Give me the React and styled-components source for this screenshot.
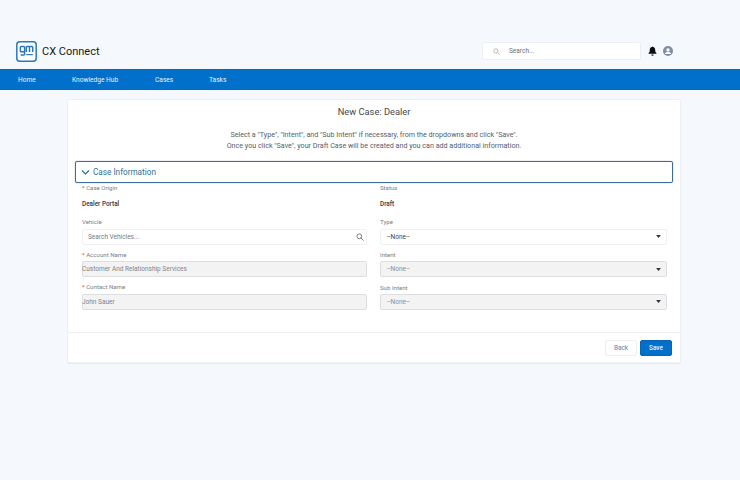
import React from "react";
import styled, { createGlobalStyle } from "styled-components";

const Global = createGlobalStyle`
  html, body { margin: 0; padding: 0; background: #f5f8fd; }
  body { font-family: Roboto, "Liberation Sans", sans-serif; width: 740px; height: 480px; overflow: hidden; }
  * { box-sizing: border-box; }
`;

const Page = styled.div`
  width: 740px;
  height: 480px;
  padding-top: 41px;
  background: #f5f8fd;
`;
const Header = styled.header`
  height: 28px;
  padding: 0 67px 0 16px;
  display: flex;
  align-items: flex-start;
`;
const Brand = styled.div`
  display: flex;
  align-items: center;
  gap: 5px;
  height: 21px;
  flex: 1;
`;
const BrandName = styled.span`
  font-size: 11px;
  color: #16181c;
`;
const TopSearch = styled.div`
  width: 159px;
  height: 18px;
  margin-top: 1px;
  background: #fff;
  border: 1px solid #eceff3;
  border-radius: 2px;
  display: flex;
  align-items: center;
  padding-left: 10px;
  gap: 9px;
  font-size: 6.5px;
  color: #6f6f6f;
`;
const TopIcons = styled.div`
  display: flex;
  align-items: center;
  gap: 6px;
  margin: 1px 0 0 7px;
  height: 18px;
`;
const Nav = styled.nav`
  height: 21px;
  background: #0070cb;
  border-top: 1px solid #0a68b4;
  border-bottom: 1px solid #0a68b4;
  display: flex;
  align-items: center;
  color: #eaf3fb;
  font-size: 6.6px;
`;
const NavItem = styled.span`
  width: ${(p) => p.$w}px;
  flex: none;
  &:first-child { margin-left: 18px; }
`;
const Card = styled.main`
  width: 614px;
  height: 264px;
  margin: 9px 0 0 67px;
  background: #fff;
  border: 1px solid #eef0f4;
  border-radius: 2px;
  box-shadow: 0 1px 1px rgba(60, 70, 90, 0.08);
  display: flex;
  flex-direction: column;
`;
const Title = styled.h1`
  margin: 0;
  padding-top: 5px;
  height: 28px;
  font-size: 9.3px;
  line-height: 13px;
  font-weight: 400;
  color: #45484d;
  text-align: center;
`;
const Intro = styled.p`
  margin: 0;
  height: 33px;
  padding-top: 1px;
  font-size: 7.15px;
  line-height: 11px;
  color: #565d68;
  text-align: center;
`;
const Section = styled.div`
  margin: 0 7px;
  height: 22px;
  border: 1px solid #3f6c92;
  border-radius: 2px;
  box-shadow: 0 0 1px #3f6c92;
  display: flex;
  align-items: center;
  padding-left: 5px;
  gap: 3px;
  font-size: 8.2px;
  color: #336f96;
`;
const Form = styled.div`
  padding: 0 14px;
  display: grid;
  grid-template-columns: 285px 287px;
  column-gap: 13px;
  flex: 1;
`;
const Column = styled.div`
  display: flex;
  flex-direction: column;
`;
const Label = styled.div`
  font-size: 6.1px;
  line-height: 8px;
  height: 8px;
  color: #7a7e84;
  margin-top: ${(p) => p.$top}px;
  margin-bottom: ${(p) => p.$bottom}px;
  & b { color: #c23934; font-weight: 400; }
`;
const Value = styled.div`
  font-size: 6.4px;
  line-height: 8px;
  height: 8px;
  font-weight: 500;
  color: #33363a;
  margin-top: 1px;
  margin-bottom: -1px;
`;
const Input = styled.div`
  height: 16px;
  display: flex;
  align-items: center;
  justify-content: space-between;
  font-size: 6.5px;
  border-radius: 2px;
  border: 1px solid ${(p) => (p.$disabled ? "#dcdee2" : "#eff1f4")};
  background: ${(p) => (p.$disabled ? "#f3f3f4" : "#fff")};
  color: ${(p) => (p.$disabled ? "#7f8388" : "#777b81")};
  text-indent: ${(p) => (p.$flush ? "-1px" : "0")};
  padding: 0 ${(p) => p.$right ?? 4}px 0 ${(p) => p.$left ?? 0}px;
`;
const NoneText = styled.span`
  color: ${(p) => (p.$dark ? "#45484c" : "#8a8e93")};
`;
const Footer = styled.div`
  height: 30px;
  border-top: 1px solid #eef0f3;
  display: flex;
  justify-content: flex-end;
  align-items: flex-start;
  gap: 3px;
  padding: 7px 8px 0 0;
`;
const Button = styled.button`
  width: 32px;
  height: 16px;
  padding: 0;
  border-radius: 2px;
  font-family: inherit;
  font-size: 6.4px;
  font-weight: ${(p) => (p.$primary ? 500 : 400)};
  border: 1px solid ${(p) => (p.$primary ? "#0a66b2" : "#eceef2")};
  background: ${(p) => (p.$primary ? "#0070cb" : "#fff")};
  color: ${(p) => (p.$primary ? "#eef5fc" : "#4f86b3")};
`;

const Logo = () => (
  <svg width="21" height="21" viewBox="0 0 21 21" fill="none">
    <rect x="0.8" y="0.8" width="19.4" height="19.4" rx="3" fill="#fff" stroke="#2b78bd" strokeWidth="1.5" />
    <g stroke="#2b78bd" strokeWidth="1.5" fill="none">
      <path d="M8.6 5.5H5.2a.8.8 0 0 0-.8.8v3.6a.8.8 0 0 0 .8.8h3.4M8.6 5.5v7.6a1 1 0 0 1-1 1H4.6" />
      <path d="M10.3 11V6.3a.8.8 0 0 1 .8-.8h4.8a.8.8 0 0 1 .8.8V11M13.5 5.5V11" />
    </g>
    <path d="M10.2 13.6h6.6" stroke="#2b78bd" strokeWidth="1.2" />
  </svg>
);
const SearchIcon = ({ size, color }) => (
  <svg width={size} height={size} viewBox="0 0 12 12" fill="none" stroke={color} strokeWidth="1.2" style={{ flex: "none" }}>
    <circle cx="5" cy="5" r="3.6" />
    <path d="M7.7 7.7 11 11" strokeLinecap="round" />
  </svg>
);
const Bell = () => (
  <svg width="9" height="10" viewBox="0 0 9 10" fill="#0b0d10">
    <path d="M4.5 0.4c.4 0 .6.3.6.7 1.4.3 2.1 1.4 2.1 2.9 0 1.6.4 2.4 1.3 3.2v.6H.5v-.6c.9-.8 1.3-1.6 1.3-3.2 0-1.5.7-2.6 2.1-2.9 0-.4.2-.7.6-.7z" />
    <path d="M3.3 8.5h2.4a1.2 1.2 0 0 1-2.4 0z" />
  </svg>
);
const Avatar = () => (
  <svg width="10" height="10" viewBox="0 0 10 10">
    <circle cx="5" cy="5" r="5" fill="#7b8fa8" />
    <circle cx="5" cy="3.9" r="1.7" fill="#fff" />
    <path d="M2 7.6c.3-1.2 1.5-1.7 3-1.7s2.7.5 3 1.7v.3H2z" fill="#fff" />
  </svg>
);
const Chevron = () => (
  <svg width="9" height="7" viewBox="0 0 9 7" fill="none" stroke="#2f6f98" strokeWidth="1.2">
    <path d="M1 1.5 4.5 5 8 1.5" />
  </svg>
);
const Caret = () => (
  <svg width="5" height="3" viewBox="0 0 5 3" fill="#33373c">
    <path d="M0.1 0.1h4.8L2.5 2.9z" />
  </svg>
);

export default function App() {
  return (
    <Page>
      <Global />
      <Header>
        <Brand>
          <Logo />
          <BrandName>CX Connect</BrandName>
        </Brand>
        <TopSearch>
          <SearchIcon size={7} color="#9a9ea4" />
          <span>Search...</span>
        </TopSearch>
        <TopIcons>
          <Bell />
          <Avatar />
        </TopIcons>
      </Header>
      <Nav>
        <NavItem $w={54}>Home</NavItem>
        <NavItem $w={83}>Knowledge Hub</NavItem>
        <NavItem $w={54}>Cases</NavItem>
        <NavItem $w={40}>Tasks</NavItem>
      </Nav>
      <Card>
        <Title>New Case: Dealer</Title>
        <Intro>
          Select a "Type", "Intent", and "Sub Intent" if necessary, from the dropdowns and click "Save".
          <br />
          Once you click "Save", your Draft Case will be created and you can add additional information.
        </Intro>
        <Section>
          <Chevron />
          <span>Case Information</span>
        </Section>
        <Form>
          <Column>
            <Label $top={1} $bottom={7}><b>*</b> Case Origin</Label>
            <Value>Dealer Portal</Value>
            <Label $top={11} $bottom={2.5}>Vehicle</Label>
            <Input $left={5} $right={2}>
              <span>Search Vehicles...</span>
              <SearchIcon size={8} color="#5b6067" />
            </Input>
            <Label $top={6} $bottom={2.5}><b>*</b> Account Name</Label>
            <Input $disabled $flush>Customer And Relationship Services</Input>
            <Label $top={6} $bottom={2.5}><b>*</b> Contact Name</Label>
            <Input $disabled $flush>John Sauer</Input>
          </Column>
          <Column>
            <Label $top={1} $bottom={7}>Status</Label>
            <Value>Draft</Value>
            <Label $top={11} $bottom={2.5}>Type</Label>
            <Input $left={6} $right={5}>
              <NoneText $dark>--None--</NoneText>
              <Caret />
            </Input>
            <Label $top={6.5} $bottom={2}>Intent</Label>
            <Input $disabled $left={6} $right={5}>
              <NoneText>--None--</NoneText>
              <Caret />
            </Input>
            <Label $top={6.5} $bottom={2}>Sub Intent</Label>
            <Input $disabled $left={6} $right={5}>
              <NoneText>--None--</NoneText>
              <Caret />
            </Input>
          </Column>
        </Form>
        <Footer>
          <Button>Back</Button>
          <Button $primary>Save</Button>
        </Footer>
      </Card>
    </Page>
  );
}
